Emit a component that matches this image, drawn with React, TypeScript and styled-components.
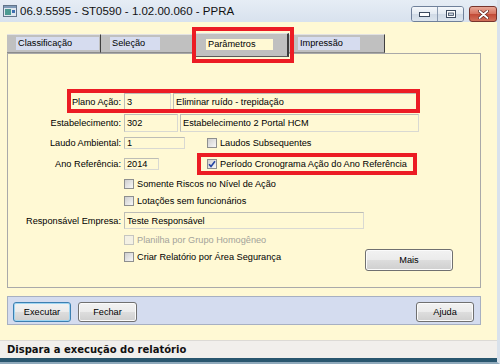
import React from "react"
import styled, { createGlobalStyle } from "styled-components"

const YELLOW = "#fff9d4"
const RED = "#ec1c24"
const UI_FONT = `"Liberation Sans", Arial, sans-serif`

const GlobalStyle = createGlobalStyle`
  html, body { margin: 0; padding: 0; }
  body {
    width: 500px;
    height: 364px;
    overflow: hidden;
    font-family: ${UI_FONT};
    font-size: 9.2px;
    color: #000;
  }
`

type CheckProps = { checked?: boolean; disabled?: boolean }

const TitleIcon = () => (
    <svg width="14" height="12" viewBox="0 0 14 12">
        <rect x="0.5" y="0.5" width="13" height="11" fill="#dfe7ef" stroke="#62748a" />
        <rect x="1" y="1" width="12" height="2" fill="#7f9ab8" />
        <rect x="2" y="4" width="6" height="6" fill="#4c9a92" />
        <rect x="9" y="5" width="3" height="3" fill="#3f6fb0" />
    </svg>
)

const Tick = () => (
    <svg width="8" height="8" viewBox="0 0 8 8">
        <path d="M1 4.2 L3 6.4 L7 1.2" fill="none" stroke="#2344a3" strokeWidth="1.6" />
    </svg>
)

const Check: React.FC<CheckProps & { label: string }> = ({ checked, disabled, label }) => (
    <CheckItem>
        <Box $disabled={disabled}>{checked && <Tick />}</Box>
        <CheckText $disabled={disabled}>{label}</CheckText>
    </CheckItem>
)

const App: React.FC = () => {
    return (
        <Window>
            <GlobalStyle />
            <TitleBar>
                <TitleIcon />
                <Title>06.9.5595 - ST0590 - 1.02.00.060 - PPRA</Title>
                <WinButtons>
                    <WinGroup>
                        <WinBtn>
                            <svg width="11" height="5" viewBox="0 0 11 5">
                                <rect x="0.5" y="0.5" width="10" height="4" fill="#fff" stroke="#3c4a5e" />
                            </svg>
                        </WinBtn>
                        <WinBtn $sep>
                            <svg width="10" height="8" viewBox="0 0 10 8">
                                <rect x="0.5" y="0.5" width="9" height="7" fill="#fff" stroke="#3c4a5e" />
                                <rect x="2.5" y="3" width="5" height="2.5" fill="#c9d3df" stroke="#3c4a5e" strokeWidth="0.8" />
                            </svg>
                        </WinBtn>
                    </WinGroup>
                    <CloseBtn>
                        <svg width="11" height="9" viewBox="0 0 11 9">
                            <path d="M1.5 1 L9.5 8 M9.5 1 L1.5 8" stroke="#5a1e18" strokeWidth="3.2" strokeLinecap="round" />
                            <path d="M1.5 1 L9.5 8 M9.5 1 L1.5 8" stroke="#fff" strokeWidth="1.8" strokeLinecap="round" />
                        </svg>
                    </CloseBtn>
                </WinButtons>
            </TitleBar>

            <Body>
                <TabStrip>
                    <Tab $w={94}><TabLabel $w={83}>Classificação</TabLabel></Tab>
                    <Tab $w={95}><TabLabel $w={50}>Seleção</TabLabel></Tab>
                    <Tab $w={93} $active><TabLabel $w={67} $active>Parâmetros</TabLabel></Tab>
                    <Tab $w={96}><TabLabel $w={62}>Impressão</TabLabel></Tab>
                </TabStrip>

                <Panel>
                    <Row $h={17} $mt={0}>
                        <Label>Plano Ação:</Label>
                        <Cell>
                            <Field $w={47}>3</Field>
                            <Field $w={246}>Eliminar ruído - trepidação</Field>
                        </Cell>
                    </Row>
                    <Row $h={18} $mt={4}>
                        <Label>Estabelecimento:</Label>
                        <Cell>
                            <Field $w={54}>302</Field>
                            <Field $w={239}>Estabelecimento 2 Portal HCM</Field>
                        </Cell>
                    </Row>
                    <Row $h={18} $mt={2}>
                        <Label>Laudo Ambiental:</Label>
                        <Cell>
                            <Slot><Field $w={61}>1</Field></Slot>
                            <Check label="Laudos Subsequentes" />
                        </Cell>
                    </Row>
                    <Row $h={17} $mt={3}>
                        <Label>Ano Referência:</Label>
                        <Cell>
                            <Slot><Field $w={35}>2014</Field></Slot>
                            <Check checked label="Período Cronograma Ação do Ano Referência" />
                        </Cell>
                    </Row>
                    <Row $h={14} $mt={5}>
                        <span />
                        <Check label="Somente Riscos no Nível de Ação" />
                    </Row>
                    <Row $h={14} $mt={3}>
                        <span />
                        <Check label="Lotações sem funcionários" />
                    </Row>
                    <Row $h={17} $mt={4}>
                        <Label>Responsável Empresa:</Label>
                        <Cell>
                            <Field $w={240}>Teste Responsável</Field>
                        </Cell>
                    </Row>
                    <Row $h={14} $mt={4}>
                        <span />
                        <Check disabled label="Planilha por Grupo Homogêneo" />
                    </Row>
                    <Row $h={22} $mt={2} $top>
                        <span />
                        <Cell>
                            <LastCheck><Check label="Criar Relatório por Área Segurança" /></LastCheck>
                            <Button $w={88} $h={22}>Mais</Button>
                        </Cell>
                    </Row>
                </Panel>

                <ButtonBar>
                    <Button $w={58} $focus>Executar</Button>
                    <Button $w={59}>Fechar</Button>
                    <Spacer />
                    <Button $w={58}>Ajuda</Button>
                </ButtonBar>

                <Status>Dispara a execução do relatório</Status>
            </Body>

            <Mark style={{ left: 192, top: 27, width: 102, height: 36 }} />
            <Mark style={{ left: 67, top: 89, width: 353, height: 24 }} />
            <Mark style={{ left: 197, top: 153, width: 220, height: 22 }} />
        </Window>
    )
}

const Window = styled.div`
    position: relative;
    width: 500px;
    height: 364px;
    box-sizing: border-box;
    display: flex;
    flex-direction: column;
    background: ${YELLOW};
    border-right: 3px solid #d9e2ec;
    border-bottom: 2px solid #8fa9bb;
`

const TitleBar = styled.div`
    height: 22px;
    flex: none;
    display: flex;
    align-items: center;
    padding-left: 3px;
    background: linear-gradient(#e6edf5, #d8e2ee);
`

const Title = styled.div`
    margin-left: 3px;
    font-family: "Liberation Sans Narrow", ${UI_FONT};
    font-size: 11.5px;
    color: #111;
    white-space: nowrap;
`

const WinButtons = styled.div`
    margin-left: auto;
    align-self: flex-start;
    margin-top: 6px;
    display: flex;
    gap: 5px;
`

const WinGroup = styled.div`
    display: flex;
    height: 14px;
    border: 1px solid #6f809a;
    border-radius: 3px;
    overflow: hidden;
`

const WinBtn = styled.div<{ $sep?: boolean }>`
    width: 25px;
    display: flex;
    align-items: center;
    justify-content: center;
    background: linear-gradient(#f4f7fb 0%, #e3eaf2 50%, #d0dae6 51%, #dbe4ee 100%);
    border-left: ${p => (p.$sep ? "1px solid #8a9ab0" : "none")};
`

const CloseBtn = styled.div`
    width: 26px;
    height: 14px;
    display: flex;
    align-items: center;
    justify-content: center;
    border: 1px solid #77342c;
    border-radius: 3px;
    background: linear-gradient(#e8a897 0%, #d7735f 50%, #c24a36 51%, #d2705a 100%);
`

const Body = styled.div`
    flex: 1;
    display: flex;
    flex-direction: column;
    padding: 11px 16px 0 7px;
`

const TabStrip = styled.div`
    display: flex;
    height: 20px;
    position: relative;
    z-index: 1;
`

const Tab = styled.div<{ $w: number; $active?: boolean }>`
    width: ${p => p.$w}px;
    box-sizing: border-box;
    flex: none;
    background: #c0c0c0;
    border-top: 1px solid #e2e2e2;
    border-right: ${p => (p.$active ? "2px solid #3c3c3c" : "1px solid #404040")};
    border-bottom: 1px solid ${p => (p.$active ? "#5a5a5a" : "#8c8c8c")};
    height: ${p => (p.$active ? 24 : 19)}px;
    align-self: ${p => (p.$active ? "flex-start" : "flex-end")};
    padding: ${p => (p.$active ? "5px 0 0 10px" : "2px 0 0 9px")};
`

const TabLabel = styled.div<{ $w: number; $active?: boolean }>`
    width: ${p => p.$w}px;
    height: ${p => (p.$active ? 11 : 13)}px;
    line-height: ${p => (p.$active ? 11 : 13)}px;
    padding-left: 2px;
    box-sizing: border-box;
    background: ${p => (p.$active ? YELLOW : "#d6dcef")};
    white-space: nowrap;
`

const Panel = styled.div`
    height: 235px;
    box-sizing: border-box;
    flex: none;
    border: 1px solid #a9a9a9;
    padding: 39px 0 0 0;
    display: flex;
    flex-direction: column;
`

const Row = styled.div<{ $h: number; $mt: number; $top?: boolean }>`
    display: grid;
    grid-template-columns: 113px 1fr;
    column-gap: 3px;
    align-items: ${p => (p.$top ? "start" : "center")};
    height: ${p => p.$h}px;
    margin-top: ${p => p.$mt}px;
`

const Label = styled.div`
    text-align: right;
    white-space: nowrap;
`

const Cell = styled.div`
    display: flex;
    align-items: center;
    gap: 2px;
    height: 100%;
`

const Slot = styled.div`
    width: 81px;
    flex: none;
    display: flex;
`

const Field = styled.div<{ $w: number }>`
    width: ${p => p.$w}px;
    height: 100%;
    box-sizing: border-box;
    flex: none;
    border: 1px solid;
    border-color: #bdbdb6 #d9d9d2 #d9d9d2 #bdbdb6;
    padding-left: 2px;
    display: flex;
    align-items: center;
    white-space: nowrap;
    overflow: hidden;
`

const CheckItem = styled.div`
    display: flex;
    align-items: center;
    gap: 3px;
    white-space: nowrap;
`

const Box = styled.div<{ $disabled?: boolean }>`
    width: 10px;
    height: 10px;
    box-sizing: border-box;
    flex: none;
    display: flex;
    align-items: center;
    justify-content: center;
    border: 1px solid ${p => (p.$disabled ? "#c6c6c0" : "#8e8f8f")};
    background: ${p =>
        p.$disabled ? "#f4f1e4" : "linear-gradient(135deg, #cfcfcf, #f7f7f7)"};
`

const CheckText = styled.span<{ $disabled?: boolean }>`
    color: ${p => (p.$disabled ? "#a3a39b" : "#000")};
`

const LastCheck = styled.div`
    width: 239px;
    flex: none;
    align-self: flex-start;
    margin-top: 3px;
`

const Button = styled.div<{ $w: number; $h?: number; $focus?: boolean }>`
    width: ${p => p.$w}px;
    height: ${p => p.$h ?? 20}px;
    box-sizing: border-box;
    flex: none;
    display: flex;
    align-items: center;
    justify-content: center;
    border: 1px solid ${p => (p.$focus ? "#3c7fb1" : "#707070")};
    border-radius: 3px;
    background: linear-gradient(#f2f2f2 0%, #ebebeb 50%, #dddddd 51%, #cfcfcf 100%);
    box-shadow: ${p => (p.$focus ? "inset 0 0 0 1px #9fd5f2" : "inset 0 0 0 1px #fbfbfb")};
`

const ButtonBar = styled.div`
    margin-top: 8px;
    height: 29px;
    box-sizing: border-box;
    flex: none;
    display: flex;
    align-items: flex-start;
    gap: 7px;
    padding: 5px 6px 0 5px;
    background: #d4dcef;
    border: 1px solid #a7b0c2;
`

const Spacer = styled.div`
    flex: 1;
`

const Status = styled.div`
    margin: auto -16px 0 -7px;
    height: 22px;
    box-sizing: border-box;
    flex: none;
    display: flex;
    align-items: center;
    padding: 0 7px;
    background: #f1efec;
    border-top: 1px solid #dcdad6;
    border-bottom: 4px solid #29566e;
    font-family: "DejaVu Sans", Verdana, sans-serif;
    font-weight: bold;
    font-size: 10px;
    color: #111;
    white-space: nowrap;
`

const Mark = styled.div`
    position: absolute;
    box-sizing: border-box;
    border: 4px solid ${RED};
    pointer-events: none;
    z-index: 2;
`

export default App
